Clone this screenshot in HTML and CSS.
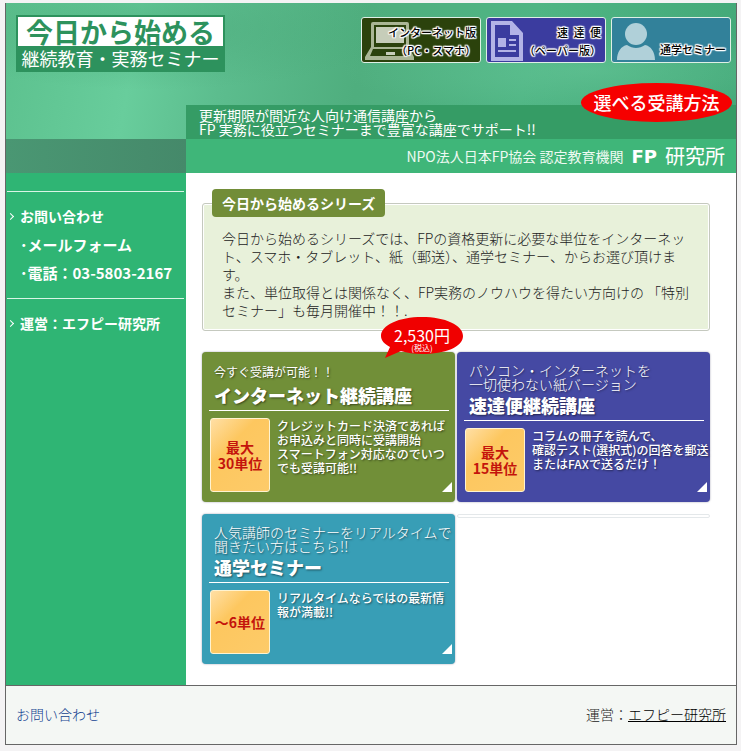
FILE: index.html
```html
<!DOCTYPE html>
<html lang="ja">
<head>
    <meta charset="UTF-8">
    <meta name="viewport" content="width=device-width, initial-scale=1.0">
    <title>今日から始める 継続教育・実務セミナー</title>
    <link rel="stylesheet" href="styles.css">
</head>
<body>
<div class="wrapper">
    <header class="header">
        <div class="header-top">
            <h1 class="logo">
                <span class="logo-main">今日から始める</span>
                <span class="logo-sub">継続教育・実務セミナー</span>
            </h1>
            <nav class="course-nav">
                <a href="#internet" class="course course-net">
                    <svg class="course-icon" width="52" height="46" viewBox="0 0 52 46">
                        <path d="M11 5h34a2 2 0 0 1 2 2v24h-3V8H12v23H9V7a2 2 0 0 1 2-2z" fill="#aab695"/>
                        <path d="M14 10h28v16H14z" fill="#c6cdb9"/>
                        <path d="M9 30h38l5 10v3H3v-3zM11 32l-3 7h39l-3-7zM24 35h9v3h-9z" fill="#aab695" fill-rule="evenodd"/>
                        <path d="M24 35h9v3h-9z" fill="#c6cdb9"/>
                    </svg>
                    <span>インターネット版<br>（PC・スマホ）</span>
                </a>
                <a href="#express" class="course course-paper">
                    <svg class="course-icon" width="40" height="46" viewBox="0 0 40 46">
                        <path d="M4 4h21l11 12v28H4zM8 8v32h24V18h-9V8z" fill="#b3b3e6" fill-rule="evenodd"/>
                        <path d="M11 21h8v9h-8zM22 22h7v2h-7zM22 27h7v2h-7zM11 33h18v2H11z" fill="#b3b3e6"/>
                    </svg>
                    <span>速&ensp;達&ensp;便<br>（ペーパー版）</span>
                </a>
                <a href="#seminar" class="course course-school">
                    <svg class="course-icon" width="46" height="46" viewBox="0 0 46 46">
                        <circle cx="24" cy="17" r="11" fill="#b0d0d9"/>
                        <path d="M5 43c0-8 4-14 10-15 6 4 12 4 18 0 6 1 10 7 10 15z" fill="#b0d0d9"/>
                    </svg>
                    <span>通学セミナー</span>
                </a>
            </nav>
        </div>
        <div class="header-bands">
            <div class="band-shade"></div>
            <p class="tagline">更新期限が間近な人向け通信講座から<br>FP 実務に役立つセミナーまで豊富な講座でサポート!!</p>
            <p class="npo">NPO法人日本FP協会 認定教育機関 <b class="npo-fp">FP</b> <span class="npo-name">研究所</span></p>
        </div>
        <p class="badge">選べる受講方法</p>
    </header>

    <div class="columns">
        <aside class="side">
            <ul class="side-menu">
                <li>
                    <a href="#contact" class="side-head">お問い合わせ</a>
                    <a href="#mail" class="side-sub">･メールフォーム</a>
                    <a href="tel:03-5803-2167" class="side-sub">･電話：03-5803-2167</a>
                </li>
                <li>
                    <a href="#company" class="side-head">運営：エフピー研究所</a>
                </li>
            </ul>
        </aside>

        <main class="main">
            <section class="intro">
                <h2>今日から始めるシリーズ</h2>
                <p>今日から始めるシリーズでは、FPの資格更新に必要な単位をインターネット、スマホ・タブレット、紙（郵送）、通学セミナー、からお選び頂けます。<br>また、単位取得とは関係なく、FP実務のノウハウを得たい方向けの 「特別セミナー」も毎月開催中！！.</p>
            </section>

            <div class="cards">
                <a href="#internet" class="card card-green">
                    <span class="card-lead card-lead-short">今すぐ受講が可能！！</span>
                    <strong class="card-title">インターネット継続講座</strong>
                    <span class="card-body">
                        <span class="unit">最大<br>30単位</span>
                        <span class="card-text">クレジットカード決済であればお申込みと同時に受講開始<br>スマートフォン対応なのでいつでも受講可能!!</span>
                    </span>
                    <span class="price">
                        <svg width="84" height="42" viewBox="0 0 84 42">
                            <path d="M42 0C65 0 83 8 83 19S65 37 42 37c-8 0-15-1-21-3L5 41l5-11C4 27 1 23 1 19 1 8 19 0 42 0z" fill="#f00000"/>
                        </svg>
                        <span class="price-text">2,530円<small>(税込)</small></span>
                    </span>
                </a>
                <a href="#express" class="card card-blue">
                    <span class="card-lead">パソコン・インターネットを<br>一切使わない紙バージョン</span>
                    <strong class="card-title">速達便継続講座</strong>
                    <span class="card-body">
                        <span class="unit">最大<br>15単位</span>
                        <span class="card-text">コラムの冊子を読んで、<br>確認テスト(選択式)の回答を郵送<br>またはFAXで送るだけ！</span>
                    </span>
                </a>
                <a href="#seminar" class="card card-teal">
                    <span class="card-lead">人気講師のセミナーをリアルタイムで<br>聞きたい方はこちら!!</span>
                    <strong class="card-title">通学セミナー</strong>
                    <span class="card-body">
                        <span class="unit">～6単位</span>
                        <span class="card-text">リアルタイムならではの最新情報が満載!!</span>
                    </span>
                </a>
                <div class="card-empty"></div>
            </div>
        </main>
    </div>

    <footer class="footer">
        <a href="#contact" class="footer-contact">お問い合わせ</a>
        <p>運営：<a href="#company" class="footer-company">エフピー研究所</a></p>
    </footer>
</div>
</body>
</html>
```

FILE: styles.css
```css
* {
    box-sizing: border-box;
}
body {
    margin: 0;
    padding: 3px 4px 6px 5px;
    background-color: #f4f3f4;
    font-family: "Noto Sans CJK JP", sans-serif;
    font-size: 14px;
    color: #222;
}
h1, h2, p, ul {
    margin: 0;
    padding: 0;
}
a {
    color: inherit;
    text-decoration: none;
}
.wrapper {
    border: 1px solid #666;
    border-top: 0;
    background-color: white;
}

/* header */
.header {
    position: relative;
    background:
        radial-gradient(ellipse at 20% 15%, rgba(72, 165, 118, 0.5), transparent 30%),
        radial-gradient(ellipse at 80% 40%, rgba(105, 200, 155, 0.5), transparent 30%),
        linear-gradient(100deg, #5cc18e 0%, #68cd9c 18%, #5cbd8e 30%, #4fae7e 48%, #4fb584 70%, #43a878 100%);
}
.header-top {
    display: flex;
    justify-content: space-between;
    align-items: flex-start;
    min-height: 102px;
    padding: 12px 5px 0 10px;
}
.logo {
    background-color: #2d925d;
    padding: 2px;
    width: 209px;
}
.logo-main {
    display: block;
    background-color: white;
    color: #2d925d;
    font-size: 27px;
    font-weight: bold;
    line-height: 29px;
    text-align: center;
}
.logo-sub {
    display: block;
    color: white;
    font-size: 18px;
    font-weight: normal;
    line-height: 24px;
    text-align: center;
}
.course-nav {
    display: flex;
    gap: 5px;
    padding-top: 2px;
}
.course {
    display: flex;
    justify-content: flex-end;
    position: relative;
    width: 120px;
    height: 46px;
    padding: 5px 4px 0 0;
    border: 1px solid #dff0e6;
    border-radius: 3px;
    overflow: hidden;
    color: black;
    font-size: 11px;
    font-weight: 500;
    line-height: 18px;
    text-align: right;
    text-shadow: 1px 0 1px white, -1px 0 1px white, 0 1px 1px white, 0 -1px 1px white,
        1px 1px 1px white, -1px -1px 1px white, 1px -1px 1px white, -1px 1px 1px white, 0 0 2px white;
}
.course span {
    position: relative;
}
.course-icon {
    position: absolute;
    left: 0;
    top: -1px;
}
.course-net {
    background-color: #2b420c;
}
.course-paper {
    background-color: #3b3c9f;
}
.course-school {
    background-color: #32819a;
    padding-top: 22px;
}
.header-bands {
    display: grid;
    grid-template-columns: 180px 1fr;
    grid-template-rows: 34px 34px;
}
.band-shade {
    grid-column: 1;
    grid-row: 2;
    background: linear-gradient(90deg, #4a9773, #45896a);
}
.tagline {
    grid-column: 2;
    grid-row: 1;
    background-color: #359c65;
    color: white;
    padding: 3px 0 0 13px;
    line-height: 14px;
}
.npo {
    grid-column: 2;
    grid-row: 2;
    display: flex;
    justify-content: flex-end;
    align-items: center;
    gap: 8px;
    background-color: #3fb679;
    color: #eefaf2;
    padding-right: 11px;
}
.npo-fp {
    font-family: "DejaVu Sans", sans-serif;
    font-size: 18px;
    color: white;
}
.npo-name {
    font-size: 20px;
    line-height: 30px;
    color: white;
}
.badge {
    position: absolute;
    right: 4px;
    top: 80px;
    width: 151px;
    height: 39px;
    border-radius: 50%;
    background-color: #f60000;
    color: white;
    font-size: 18px;
    font-weight: 500;
    line-height: 38px;
    text-align: center;
}

/* side menu */
.columns {
    display: flex;
}
.side {
    flex: 0 0 180px;
    background-color: #2fb574;
    color: white;
    padding: 18px 2px 18px 1px;
}
.side-menu {
    list-style: none;
}
.side-menu li {
    border-top: 1px solid #d9f5e6;
    padding: 10px 0 12px;
}
.side-head, .side-sub {
    display: flex;
    align-items: center;
    height: 28px;
    font-weight: bold;
}
.side-head::before {
    content: "";
    width: 4px;
    height: 4px;
    margin: 0 7px 0 1px;
    border-top: 1px solid white;
    border-right: 1px solid white;
    transform: rotate(45deg);
}
.side-sub {
    font-size: 15px;
    padding-left: 13px;
}

/* main */
.main {
    flex: 1;
    padding: 30px 26px 21px 16px;
}
.intro {
    border: 1px solid #c5c9bf;
    border-radius: 3px;
    background-color: #e8f1da;
    padding: 0 19px 11px;
    box-shadow: inset 0 0 0 1px white;
}
.intro h2 {
    width: fit-content;
    margin: -15px 0 0 -10px;
    padding: 0 10px;
    border-radius: 4px;
    background-color: #728d38;
    color: white;
    font-size: 14px;
    line-height: 28px;
}
.intro p {
    padding-top: 12px;
    font-weight: 300;
    line-height: 18px;
}
.cards {
    display: grid;
    grid-template-columns: 1fr 1fr;
    gap: 12px 2px;
    margin-top: 21px;
}
.card {
    position: relative;
    display: flex;
    flex-direction: column;
    min-height: 150px;
    padding: 11px 0 10px;
    border-radius: 4px;
    box-shadow: 0 0 2px #99a;
    color: white;
    text-shadow: 1px 1px 2px rgba(0, 0, 0, 0.5);
}
.card::after {
    content: "";
    position: absolute;
    right: 3px;
    bottom: 10px;
    border-left: 10px solid transparent;
    border-bottom: 10px solid white;
}
.card-green {
    background-color: #718f38;
}
.card-blue {
    background-color: #4549a3;
}
.card-teal {
    background-color: #389eb6;
}
.card-lead {
    padding-left: 12px;
    font-weight: 300;
    line-height: 14px;
    white-space: nowrap;
}
.card-lead-short {
    font-size: 12px;
    font-weight: normal;
    line-height: 18px;
}
.card-title {
    margin: 2px 6px 0 7px;
    padding: 0 0 3px 5px;
    border-bottom: 1px solid white;
    font-size: 18px;
    font-weight: 900;
    line-height: 24px;
}
.card-body {
    flex: 1;
    display: flex;
    gap: 7px;
    padding: 7px 0 0 8px;
}
.unit {
    flex: 0 0 60px;
    display: flex;
    align-items: center;
    justify-content: center;
    border: 1px solid #fff3d0;
    border-radius: 3px;
    background: linear-gradient(135deg, #ffdfa5, #fdc75f 35%, #fdcb69);
    color: #c4140c;
    font-weight: bold;
    line-height: 16px;
    text-align: center;
    text-shadow: none;
}
.card-text {
    font-size: 12px;
    font-weight: 500;
    line-height: 14px;
    padding-top: 1px;
}
.card-empty {
    height: 4px;
    border: 1px solid #e4e8ea;
    border-radius: 2px;
}

/* price balloon */
.price {
    position: absolute;
    right: -9px;
    top: -35px;
    z-index: 1;
    text-shadow: none;
}
.price svg {
    display: block;
}
.price-text {
    position: absolute;
    left: 0;
    right: 0;
    top: 9px;
    font-size: 16px;
    line-height: 18px;
    text-align: center;
}
.price-text small {
    display: block;
    font-size: 8px;
    line-height: 8px;
}

/* footer */
.footer {
    display: flex;
    justify-content: space-between;
    align-items: center;
    border-top: 1px solid #666;
    background-color: #f4f7f4;
    padding: 18px 10px 19px;
    font-weight: 300;
    line-height: 21px;
}
.footer-contact {
    color: #12418f;
}
.footer-company {
    color: black;
    text-decoration: underline;
}
```
